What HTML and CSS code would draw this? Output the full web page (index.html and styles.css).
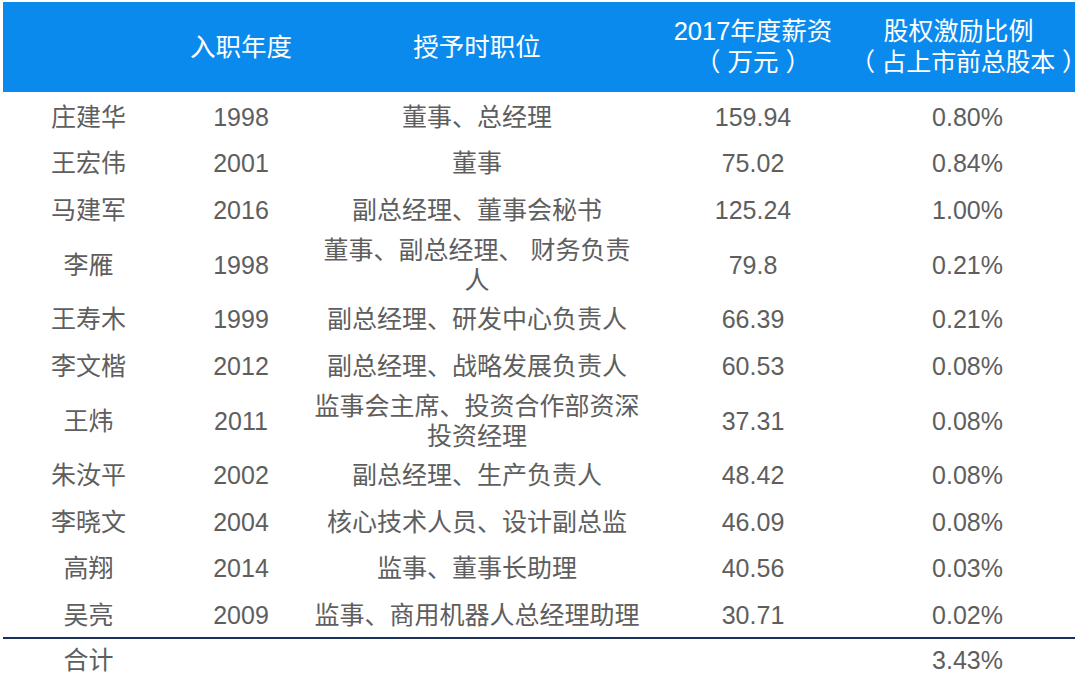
FILE: index.html
```html
<!DOCTYPE html>
<html lang="zh-CN">
<head>
<meta charset="utf-8">
<title>股权激励</title>
<link rel="stylesheet" href="styles.css">
</head>
<body>
<table class="grid">
  <colgroup>
    <col class="c-name">
    <col class="c-year">
    <col class="c-pos">
    <col class="c-pay">
    <col class="c-ratio">
  </colgroup>
  <thead>
    <tr class="head">
      <th></th>
      <th>入职年度</th>
      <th>授予时职位</th>
      <th>2017年度薪资<br><span class="unit">（ 万元 ）</span></th>
      <th class="wide"><span class="title">股权激励比例</span><br><span class="unit">（ 占上市前总股本 ）</span></th>
    </tr>
  </thead>
  <tbody>
    <tr><td>庄建华</td><td>1998</td><td>董事、总经理</td><td>159.94</td><td>0.80%</td></tr>
    <tr><td>王宏伟</td><td>2001</td><td>董事</td><td>75.02</td><td>0.84%</td></tr>
    <tr><td>马建军</td><td>2016</td><td>副总经理、董事会秘书</td><td>125.24</td><td>1.00%</td></tr>
    <tr class="tall"><td>李雁</td><td>1998</td><td>董事、副总经理、 财务负责<br>人</td><td>79.8</td><td>0.21%</td></tr>
    <tr><td>王寿木</td><td>1999</td><td>副总经理、研发中心负责人</td><td>66.39</td><td>0.21%</td></tr>
    <tr><td>李文楷</td><td>2012</td><td>副总经理、战略发展负责人</td><td>60.53</td><td>0.08%</td></tr>
    <tr class="tall"><td>王炜</td><td>2011</td><td>监事会主席、投资合作部资深<br>投资经理</td><td>37.31</td><td>0.08%</td></tr>
    <tr><td>朱汝平</td><td>2002</td><td>副总经理、生产负责人</td><td>48.42</td><td>0.08%</td></tr>
    <tr><td>李晓文</td><td>2004</td><td>核心技术人员、设计副总监</td><td>46.09</td><td>0.08%</td></tr>
    <tr><td>高翔</td><td>2014</td><td>监事、董事长助理</td><td>40.56</td><td>0.03%</td></tr>
    <tr><td>吴亮</td><td>2009</td><td>监事、商用机器人总经理助理</td><td>30.71</td><td>0.02%</td></tr>
  </tbody>
  <tfoot>
    <tr class="total"><td>合计</td><td></td><td></td><td></td><td>3.43%</td></tr>
  </tfoot>
</table>
</body>
</html>
```

FILE: styles.css
```css
html, body {
  margin: 0;
  padding: 0;
  background: #ffffff;
}

body {
  padding: 2px 5px 0 3px;
  font-family: "Liberation Sans", "Noto Sans CJK SC", sans-serif;
  font-size: 25px;
  color: #5e5e5e;
}

.grid {
  width: 1072px;
  border-collapse: collapse;
  table-layout: fixed;
}

.c-name { width: 171px; }
.c-year { width: 134px; }
.c-pos { width: 338px; }
.c-pay { width: 214px; }
.c-ratio { width: 215px; }

.grid th,
.grid td {
  padding: 0;
  text-align: center;
  vertical-align: middle;
  white-space: nowrap;
}

.head th {
  height: 90px;
  background: #0b8aee;
  color: #ffffff;
  font-weight: normal;
  line-height: 31px;
  font-size: 25.5px;
}

.head th.wide {
  font-size: 25px;
}

.head th.wide .title {
  padding-right: 18px;
}

.head th.wide .unit {
  display: inline-block;
  margin: 0 -10px;
  letter-spacing: -0.2px;
}

.grid tbody td {
  height: 43.5px;
  padding-top: 3px;
  line-height: 30px;
}

.grid tbody tr.tall td {
  height: 60px;
}

.total td {
  height: 42px;
  padding-bottom: 1px;
  line-height: 30px;
  border-top: 2px solid #1b2f5c;
}
```
